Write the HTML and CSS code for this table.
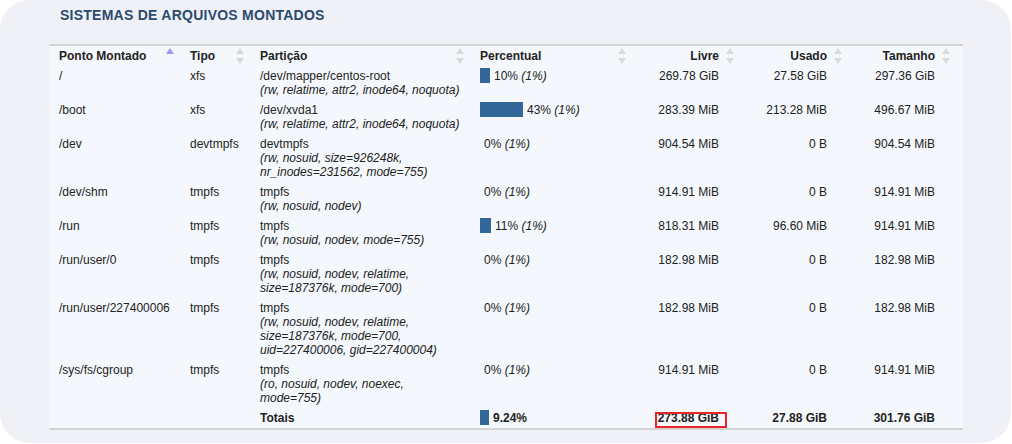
FILE: index.html
```html
<!DOCTYPE html>
<html lang="pt">
<head>
<meta charset="utf-8">
<title>Sistemas de arquivos montados</title>
<link rel="stylesheet" href="styles.css">
</head>
<body>
<div class="card">
  <h2 class="title">SISTEMAS DE ARQUIVOS MONTADOS</h2>
  <div class="table-wrap">
    <table class="fs">
      <colgroup>
        <col class="c1"><col class="c2"><col class="c3"><col class="c4"><col class="c5"><col class="c6"><col class="c7">
      </colgroup>
      <thead>
        <tr>
          <th>Ponto Montado<svg class="sort" viewBox="0 0 8 16"><polygon class="active" points="0,6 4,0 8,6"/></svg></th>
          <th>Tipo<svg class="sort" viewBox="0 0 8 16"><polygon points="0,6 4,0 8,6"/><polygon points="0,10 4,16 8,10"/></svg></th>
          <th>Partição<svg class="sort" viewBox="0 0 8 16"><polygon points="0,6 4,0 8,6"/><polygon points="0,10 4,16 8,10"/></svg></th>
          <th>Percentual<svg class="sort" viewBox="0 0 8 16"><polygon points="0,6 4,0 8,6"/><polygon points="0,10 4,16 8,10"/></svg></th>
          <th class="num">Livre<svg class="sort" viewBox="0 0 8 16"><polygon points="0,6 4,0 8,6"/><polygon points="0,10 4,16 8,10"/></svg></th>
          <th class="num">Usado<svg class="sort" viewBox="0 0 8 16"><polygon points="0,6 4,0 8,6"/><polygon points="0,10 4,16 8,10"/></svg></th>
          <th class="num">Tamanho<svg class="sort" viewBox="0 0 8 16"><polygon points="0,6 4,0 8,6"/><polygon points="0,10 4,16 8,10"/></svg></th>
        </tr>
      </thead>
      <tbody>
        <tr>
          <td>/</td><td>xfs</td>
          <td>/dev/mapper/centos-root<span class="opts">(rw, relatime, attr2, inode64, noquota)</span></td>
          <td><span class="bar" style="width:10px"></span>10% <i>(1%)</i></td>
          <td class="num">269.78 GiB</td><td class="num">27.58 GiB</td><td class="num">297.36 GiB</td>
        </tr>
        <tr>
          <td>/boot</td><td>xfs</td>
          <td>/dev/xvda1<span class="opts">(rw, relatime, attr2, inode64, noquota)</span></td>
          <td><span class="bar" style="width:43px"></span>43% <i>(1%)</i></td>
          <td class="num">283.39 MiB</td><td class="num">213.28 MiB</td><td class="num">496.67 MiB</td>
        </tr>
        <tr>
          <td>/dev</td><td>devtmpfs</td>
          <td>devtmpfs<span class="opts">(rw, nosuid, size=926248k,<br>nr_inodes=231562, mode=755)</span></td>
          <td><span class="bar" style="width:0px"></span>0% <i>(1%)</i></td>
          <td class="num">904.54 MiB</td><td class="num">0 B</td><td class="num">904.54 MiB</td>
        </tr>
        <tr>
          <td>/dev/shm</td><td>tmpfs</td>
          <td>tmpfs<span class="opts">(rw, nosuid, nodev)</span></td>
          <td><span class="bar" style="width:0px"></span>0% <i>(1%)</i></td>
          <td class="num">914.91 MiB</td><td class="num">0 B</td><td class="num">914.91 MiB</td>
        </tr>
        <tr>
          <td>/run</td><td>tmpfs</td>
          <td>tmpfs<span class="opts">(rw, nosuid, nodev, mode=755)</span></td>
          <td><span class="bar" style="width:11px"></span>11% <i>(1%)</i></td>
          <td class="num">818.31 MiB</td><td class="num">96.60 MiB</td><td class="num">914.91 MiB</td>
        </tr>
        <tr>
          <td>/run/user/0</td><td>tmpfs</td>
          <td>tmpfs<span class="opts">(rw, nosuid, nodev, relatime,<br>size=187376k, mode=700)</span></td>
          <td><span class="bar" style="width:0px"></span>0% <i>(1%)</i></td>
          <td class="num">182.98 MiB</td><td class="num">0 B</td><td class="num">182.98 MiB</td>
        </tr>
        <tr>
          <td>/run/user/227400006</td><td>tmpfs</td>
          <td>tmpfs<span class="opts">(rw, nosuid, nodev, relatime,<br>size=187376k, mode=700,<br>uid=227400006, gid=227400004)</span></td>
          <td><span class="bar" style="width:0px"></span>0% <i>(1%)</i></td>
          <td class="num">182.98 MiB</td><td class="num">0 B</td><td class="num">182.98 MiB</td>
        </tr>
        <tr>
          <td>/sys/fs/cgroup</td><td>tmpfs</td>
          <td>tmpfs<span class="opts">(ro, nosuid, nodev, noexec,<br>mode=755)</span></td>
          <td><span class="bar" style="width:0px"></span>0% <i>(1%)</i></td>
          <td class="num">914.91 MiB</td><td class="num">0 B</td><td class="num">914.91 MiB</td>
        </tr>
      </tbody>
      <tfoot>
        <tr>
          <td></td><td></td>
          <td>Totais</td>
          <td><span class="bar" style="width:9px"></span>9.24%</td>
          <td class="num hl">273.88 GiB<span class="mark"></span></td>
          <td class="num">27.88 GiB</td>
          <td class="num">301.76 GiB</td>
        </tr>
      </tfoot>
    </table>
  </div>
</div>
</body>
</html>
```

FILE: styles.css
```css
html, body {
  margin: 0;
  padding: 0;
  background: #ffffff;
}

body {
  font-family: "Liberation Sans", Arial, sans-serif;
  color: #222222;
}

.card {
  width: 1011px;
  height: 443px;
  box-sizing: border-box;
  background: #f0f1f6;
  border-radius: 30px;
  padding: 7px 0 0 49px;
}

.title {
  margin: 0;
  padding-left: 11px;
  font-size: 14px;
  line-height: 16px;
  font-weight: bold;
  letter-spacing: 0.25px;
  color: #2a4a6e;
}

.table-wrap {
  margin-top: 21px;
  width: 914px;
  background: #f4f8fc;
  border-top: 2px solid #d3d3d3;
  border-bottom: 2px solid #d3d3d3;
}

.fs {
  width: 907px;
  border-collapse: collapse;
  table-layout: fixed;
  font-size: 12px;
  line-height: 14px;
}

.c1 { width: 131px; }
.c2 { width: 70px; }
.c3 { width: 220px; }
.c4 { width: 162px; }
.c5 { width: 108px; }
.c6 { width: 108px; }
.c7 { width: 108px; }

.fs th,
.fs td {
  padding: 3px 6px 3px 10px;
  text-align: left;
  vertical-align: top;
  white-space: nowrap;
}

.fs th {
  position: relative;
  font-weight: bold;
}

.fs .num {
  text-align: right;
  padding-right: 21px;
}

.sort {
  position: absolute;
  right: 6px;
  top: 2px;
  width: 8px;
  height: 16px;
  fill: #d9d9d9;
}

.sort .active {
  fill: #9d9df0;
}

.opts {
  display: block;
  font-style: italic;
}

.bar {
  display: inline-block;
  height: 15px;
  margin-right: 4px;
  vertical-align: top;
  margin-top: -1px;
  background: #336699;
}

.fs tfoot td {
  font-weight: bold;
}

.fs .hl {
  position: relative;
}

.mark {
  position: absolute;
  left: 23px;
  right: 13px;
  top: 4px;
  bottom: 0;
  border: 2px solid #e8262a;
}
```
